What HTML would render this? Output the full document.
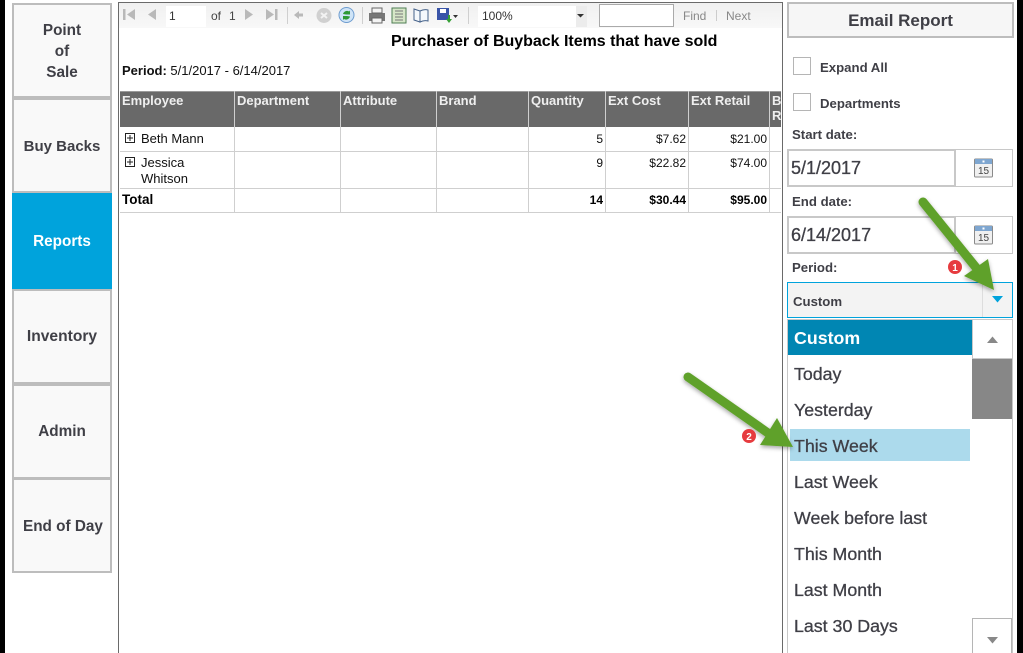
<!DOCTYPE html>
<html><head><meta charset="utf-8"><style>
html,body{margin:0;padding:0;width:1023px;height:653px;overflow:hidden;background:#fff}
body{position:relative;font-family:"Liberation Sans",sans-serif}
.a,.a *{box-sizing:border-box}
.a{position:absolute}
.nav{position:absolute;left:12px;width:100px;background:#f9f9f9;border:2px solid #bdbdbd;color:#3f3f46;font-weight:bold;font-size:15.3px;line-height:21px;display:flex;align-items:center;justify-content:center;text-align:center;white-space:nowrap;box-sizing:border-box;padding-top:2px;overflow:hidden}
.t{position:absolute;white-space:nowrap}
.l{position:absolute;background:#cfcfcf}
.h{position:absolute;color:#efefef;font-weight:bold;font-size:13px;top:93px;white-space:nowrap}
.c{position:absolute;font-size:12px;color:#111;white-space:nowrap;text-align:right}
.n{font-size:13px;letter-spacing:0}
.b{font-weight:bold;color:#000}
.ui{color:#3f3f46;font-size:13.2px;font-weight:bold;position:absolute;white-space:nowrap}
.it{position:absolute;left:794px;font-size:17.8px;color:#3f3f46;white-space:nowrap;line-height:24px;-webkit-text-stroke:.3px #3f3f46}
.cb{position:absolute;left:793px;width:18px;height:18px;border:1px solid #b5b5b5;background:#fff;box-sizing:border-box}
.box{position:absolute;left:787px;width:226px;height:38px;border:1px solid #c8c8c8;box-sizing:border-box;background:#fff}
.inp{position:absolute;left:787px;width:169px;height:38px;border:2px solid #c8c8c8;box-sizing:border-box;background:#fff;font-size:18px;color:#3f3f46;line-height:35px;padding-left:2px;-webkit-text-stroke:.3px #3f3f46}
</style></head><body>
<div class="a" style="left:0;top:0;width:5px;height:653px;background:#000"></div>
<div class="a" style="left:1017px;top:0;width:6px;height:653px;background:#000"></div>

<div class="nav" style="top:3px;height:95px">Point<br>of<br>Sale</div>
<div class="nav" style="top:98px;height:95px;font-size:15px">Buy Backs</div>
<div class="nav" style="top:193px;height:96px;background:#00a3dc;border-color:#00a3dc;color:#fff;padding-top:0">Reports</div>
<div class="nav" style="top:289px;height:95px;padding-top:0;font-size:15.6px">Inventory</div>
<div class="nav" style="top:384px;height:95px;padding-top:0">Admin</div>
<div class="nav" style="top:478px;height:95px;justify-content:flex-start;padding-left:9px">End of Day</div>

<!-- report frame -->
<div class="a" style="left:118px;top:2px;width:665px;height:651px;border:1px solid #6a6a6a;border-bottom:0;background:#fff"></div>
<div class="a" style="left:119px;top:3px;width:663px;height:25px;background:linear-gradient(#f0f0f0,#f8f8f8)"></div>
<div class="a" style="left:166px;top:6px;width:40px;height:21px;background:#fff"></div>
<div class="a" style="left:478px;top:6px;width:109px;height:21px;background:#fff"></div>
<div class="a" style="left:576px;top:6px;width:11px;height:21px;background:#ececec"></div>
<div class="a" style="left:599px;top:4px;width:75px;height:23px;background:#fff;border:1px solid #aaa"></div>
<svg class="a" style="left:118px;top:0" width="480" height="28">
<g fill="#b9b9b9"><rect x="5" y="9" width="2.5" height="11"/><path d="M17 9v11l-8-5.500z"/><path d="M38 9v11l-8-5.500z"/><path d="M127 9v11l8-5.500z"/><path d="M148 9v11l8-5.500z"/><rect x="157" y="9" width="2.500" height="11"/>
<path d="M176 15l5-4v2.500h4v3h-4v2.500z"/><circle cx="206" cy="15.500" r="7.500" fill="#d0d0d0"/></g>
<path d="M203 13l6 5M209 13l-6 5" stroke="#f2f2f2" stroke-width="2"/>
<rect x="169" y="7" width="1" height="17" fill="#cfcfcf"/><rect x="244" y="7" width="1" height="17" fill="#cfcfcf"/><rect x="350" y="7" width="1" height="17" fill="#cfcfcf"/>
<circle cx="228.500" cy="15" r="7.500" fill="#cfe4f7" stroke="#6d9ccf"/><path d="M225 14a4 4 0 0 1 6-2.500l1-1v4h-4zM232 16.500a4 4 0 0 1-6 2.500l-1 1v-4h4z" fill="#2f9a35"/>
<path d="M251 13h16v8h-16z" fill="#777"/><path d="M254 8h10v5h-10zM254 18h10v5h-10z" fill="#f4f4f4" stroke="#666"/>
<rect x="274" y="8" width="14" height="15" fill="#d6e6c8" stroke="#4f7d54"/><path d="M277 11h8M277 14h8M277 17h8M277 20h8" stroke="#777"/>
<path d="M296 9l6 2v11l-6-2zM302 11q4-2 8-1v11q-4-1-8 1z" fill="#f4f8fc" stroke="#45628a"/>
<rect x="319" y="8" width="12" height="12" fill="#3954a8"/><rect x="322" y="9" width="6" height="4" fill="#fff"/><path d="M330 15v4h-2l3 4 3-4h-2v-4z" fill="#35a035"/>
<path d="M335 15h5l-2.500 3z" fill="#333"/><path d="M459 14h7l-3.500 3.500z" fill="#333"/>
</svg>
<div class="t" style="left:169px;top:9px;font-size:12px;color:#333">1</div>
<div class="t" style="left:211px;top:9px;font-size:12px;color:#444">of</div>
<div class="t" style="left:229px;top:9px;font-size:12px;color:#444">1</div>
<div class="t" style="left:482px;top:9px;font-size:12px;color:#333">100%</div>
<div class="t" style="left:683px;top:9px;font-size:12px;color:#888">Find</div>
<div class="a" style="left:716px;top:10px;width:1px;height:11px;background:#ccc"></div>
<div class="t" style="left:726px;top:9px;font-size:12px;color:#888">Next</div>

<div class="t" style="left:391px;top:33px;font-size:16px;font-weight:bold;color:#000;letter-spacing:-.02px">Purchaser of Buyback Items that have sold</div>
<div class="t" style="left:122px;top:63px;font-size:13px;color:#111;line-height:15px"><b>Period:</b> 5/1/2017 - 6/14/2017</div>

<!-- table -->
<div class="a" style="left:120px;top:91px;width:661px;height:36px;background:#696969"></div>
<div class="l" style="left:120px;top:91px;width:661px;height:1px;background:#9a9a9a"></div>
<div class="l" style="left:120px;top:151px;width:661px;height:1px"></div>
<div class="l" style="left:120px;top:188px;width:661px;height:1px"></div>
<div class="l" style="left:120px;top:212px;width:661px;height:1px"></div>
<div class="l" style="left:234px;top:91px;width:1px;height:121px"></div>
<div class="l" style="left:340px;top:91px;width:1px;height:121px"></div>
<div class="l" style="left:436px;top:91px;width:1px;height:121px"></div>
<div class="l" style="left:528px;top:91px;width:1px;height:121px"></div>
<div class="l" style="left:605px;top:91px;width:1px;height:121px"></div>
<div class="l" style="left:688px;top:91px;width:1px;height:121px"></div>
<div class="l" style="left:769px;top:91px;width:1px;height:121px"></div>
<div class="h" style="left:122px">Employee</div>
<div class="h" style="left:237px">Department</div>
<div class="h" style="left:343px">Attribute</div>
<div class="h" style="left:439px">Brand</div>
<div class="h" style="left:531px">Quantity</div>
<div class="h" style="left:608px">Ext Cost</div>
<div class="h" style="left:691px">Ext Retail</div>
<div class="h" style="left:772px;line-height:15px;width:9px;overflow:hidden">B<br>R</div>

<svg class="a" style="left:125px;top:133px" width="11" height="40"><g fill="#fff" stroke="#222"><rect x=".5" y=".5" width="9" height="9"/><path d="M2 5h6M5 2v6"/><rect x=".5" y="24.500" width="9" height="9"/><path d="M2 29h6M5 26v6"/></g></svg>
<div class="c n" style="left:141px;top:131px">Beth Mann</div>
<div class="c n" style="left:141px;top:155px;text-align:left;line-height:16px">Jessica<br>Whitson</div>
<div class="c b" style="left:122px;top:192px;font-size:13.5px">Total</div>
<div class="c" style="right:420px;top:132px">5</div>
<div class="c" style="right:337px;top:132px">$7.62</div>
<div class="c" style="right:256px;top:132px">$21.00</div>
<div class="c" style="right:420px;top:156px">9</div>
<div class="c" style="right:337px;top:156px">$22.82</div>
<div class="c" style="right:256px;top:156px">$74.00</div>
<div class="c b" style="right:420px;top:193px">14</div>
<div class="c b" style="right:337px;top:193px">$30.44</div>
<div class="c b" style="right:256px;top:193px">$95.00</div>

<!-- right panel -->
<div class="a" style="left:787px;top:2px;width:227px;height:36px;background:#f6f6f6;border:2px solid #bdbdbd;color:#3f3f46;font-size:17px;font-weight:bold;text-align:center;line-height:33px">Email Report</div>
<div class="cb" style="top:57px"></div><div class="ui" style="left:820px;top:60px">Expand All</div>
<div class="cb" style="top:93px"></div><div class="ui" style="left:820px;top:96px">Departments</div>
<div class="ui" style="left:792px;top:127px">Start date:</div>
<div class="box" style="top:149px"></div><div class="inp" style="top:149px">5/1/2017</div>
<div class="ui" style="left:792px;top:194px">End date:</div>
<div class="box" style="top:216px"></div><div class="inp" style="top:216px">6/14/2017</div>
<svg class="a" style="left:974px;top:158px" width="20" height="20"><rect x=".5" y="1" width="18" height="18" rx="1" fill="#f0f0f0" stroke="#8a8a8a"/><rect x="1" y="1" width="17" height="5" fill="#7ea6d0"/><rect x="8.500" y="2.500" width="2" height="2" fill="#fff"/><text x="9.500" y="16" font-size="10" font-family="Liberation Sans" text-anchor="middle" fill="#444">15</text></svg>
<svg class="a" style="left:974px;top:225px" width="20" height="20"><rect x=".5" y="1" width="18" height="18" rx="1" fill="#f0f0f0" stroke="#8a8a8a"/><rect x="1" y="1" width="17" height="5" fill="#7ea6d0"/><rect x="8.500" y="2.500" width="2" height="2" fill="#fff"/><text x="9.500" y="16" font-size="10" font-family="Liberation Sans" text-anchor="middle" fill="#444">15</text></svg>
<div class="ui" style="left:792px;top:260px">Period:</div>
<div class="a" style="left:787px;top:282px;width:226px;height:36px;background:#f3f3f3;border:1px solid #00a3dc"></div>
<div class="a" style="left:982px;top:283px;width:1px;height:34px;background:#ddd"></div>
<div class="ui" style="left:793px;top:294px">Custom</div>
<svg class="a" style="left:992px;top:296px" width="12" height="8"><path d="M0 0h11l-5.500 6.500z" fill="#00a3dc"/></svg>

<!-- dropdown -->
<div class="a" style="left:787px;top:319px;width:226px;height:334px;background:#fff;border:1px solid #c8c8c8;border-bottom:0"></div>
<div class="a" style="left:788px;top:320px;width:184px;height:35px;background:#0086b3"></div>
<div class="it" style="top:326px;color:#fff;font-weight:bold;-webkit-text-stroke:0">Custom</div>
<div class="it" style="top:362px">Today</div>
<div class="it" style="top:398px">Yesterday</div>
<div class="a" style="left:790px;top:429px;width:180px;height:32px;background:#acdaec"></div>
<div class="it" style="top:434px">This Week</div>
<div class="it" style="top:470px">Last Week</div>
<div class="it" style="top:506px">Week before last</div>
<div class="it" style="top:542px">This Month</div>
<div class="it" style="top:578px">Last Month</div>
<div class="it" style="top:614px">Last 30 Days</div>
<div class="a" style="left:972px;top:320px;width:40px;height:39px;background:#fff;border:1px solid #c8c8c8;border-top:0;border-right:0"></div>
<svg class="a" style="left:987px;top:336px" width="12" height="8"><path d="M0 7h11l-5.500-6.500z" fill="#888"/></svg>
<div class="a" style="left:972px;top:359px;width:40px;height:60px;background:#878787"></div>
<div class="a" style="left:972px;top:618px;width:40px;height:35px;background:#fff;border:1px solid #b5b5b5;border-bottom:0"></div>
<svg class="a" style="left:987px;top:637px" width="12" height="8"><path d="M0 0h11l-5.500 6.500z" fill="#888"/></svg>

<!-- arrows -->
<svg class="a" style="left:0;top:0" width="1023" height="653">
<defs><filter id="s" x="-20%" y="-20%" width="140%" height="140%"><feDropShadow dx="0" dy="2" stdDeviation="2" flood-color="#000" flood-opacity=".35"/></filter></defs>
<g filter="url(#s)">
<path d="M923 202L978 270" stroke="#5ea12a" stroke-width="9" stroke-linecap="round"/>
<path d="M964 276L988 259L994 290Z" fill="#5ea12a"/>
<path d="M688 377L768 433" stroke="#5ea12a" stroke-width="9" stroke-linecap="round"/>
<path d="M777 418L760 445L793 447Z" fill="#5ea12a"/>
</g>
<circle cx="955" cy="267" r="7" fill="#e63b3f"/><text x="955" y="271" font-size="10" font-weight="bold" font-family="Liberation Sans" fill="#fff" text-anchor="middle">1</text>
<circle cx="749" cy="436" r="7" fill="#e63b3f"/><text x="749" y="440" font-size="10" font-weight="bold" font-family="Liberation Sans" fill="#fff" text-anchor="middle">2</text>
</svg>
</body></html>
